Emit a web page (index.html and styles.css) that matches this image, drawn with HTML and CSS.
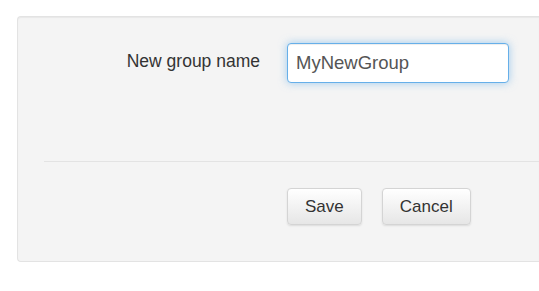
FILE: index.html
```html
<!DOCTYPE html>
<html>
<head>
<meta charset="utf-8">
<link rel="stylesheet" href="styles.css">
</head>
<body>
<div class="panel">
  <div class="form-row">
    <label class="label" for="name">New group name</label>
    <input class="input" id="name" type="text" value="MyNewGroup">
  </div>
  <div class="divider"></div>
  <div class="actions">
    <button class="btn">Save</button>
    <button class="btn">Cancel</button>
  </div>
</div>
</body>
</html>
```
FILE: styles.css
```css
html, body {
  margin: 0;
  padding: 0;
  overflow: hidden;
  background: #ffffff;
  font-family: "Liberation Sans", Arial, sans-serif;
}
.panel {
  margin: 16px 0 0 17px;
  background: #f4f4f4;
  border: 1px solid #e3e3e3;
  border-right: none;
  border-radius: 4px 0 0 4px;
  box-shadow: inset 0 1px 1px rgba(0,0,0,0.05);
  padding: 26px 0 36px 26px;
}
.form-row {
  display: flex;
  align-items: flex-start;
}
.label {
  width: 216px;
  text-align: right;
  font-size: 17.5px;
  line-height: 20px;
  color: #333333;
  padding-top: 8px;
}
.input {
  margin-left: 27px;
  width: 222px;
  height: 40px;
  box-sizing: border-box;
  padding: 0 8px;
  font-family: "Liberation Sans", Arial, sans-serif;
  font-size: 18.5px;
  color: #555555;
  background: #ffffff;
  border: 1px solid #66afe9;
  border-radius: 4px;
  box-shadow: inset 0 1px 1px rgba(0,0,0,0.075), 0 0 8px rgba(102,175,233,0.6);
  outline: none;
}
.divider {
  margin-top: 78px;
  border-top: 1px solid #e3e3e3;
}
.actions {
  display: flex;
  gap: 20px;
  padding-left: 243px;
  margin-top: 26px;
}
.btn {
  height: 37px;
  padding: 0 17px;
  font-family: "Liberation Sans", Arial, sans-serif;
  font-size: 17px;
  color: #333333;
  background: linear-gradient(to bottom, #ffffff 0%, #e6e6e6 100%);
  border: 1px solid #d4d4d4;
  border-radius: 4px;
  box-shadow: 0 1px 2px rgba(0,0,0,0.1);
}
```
